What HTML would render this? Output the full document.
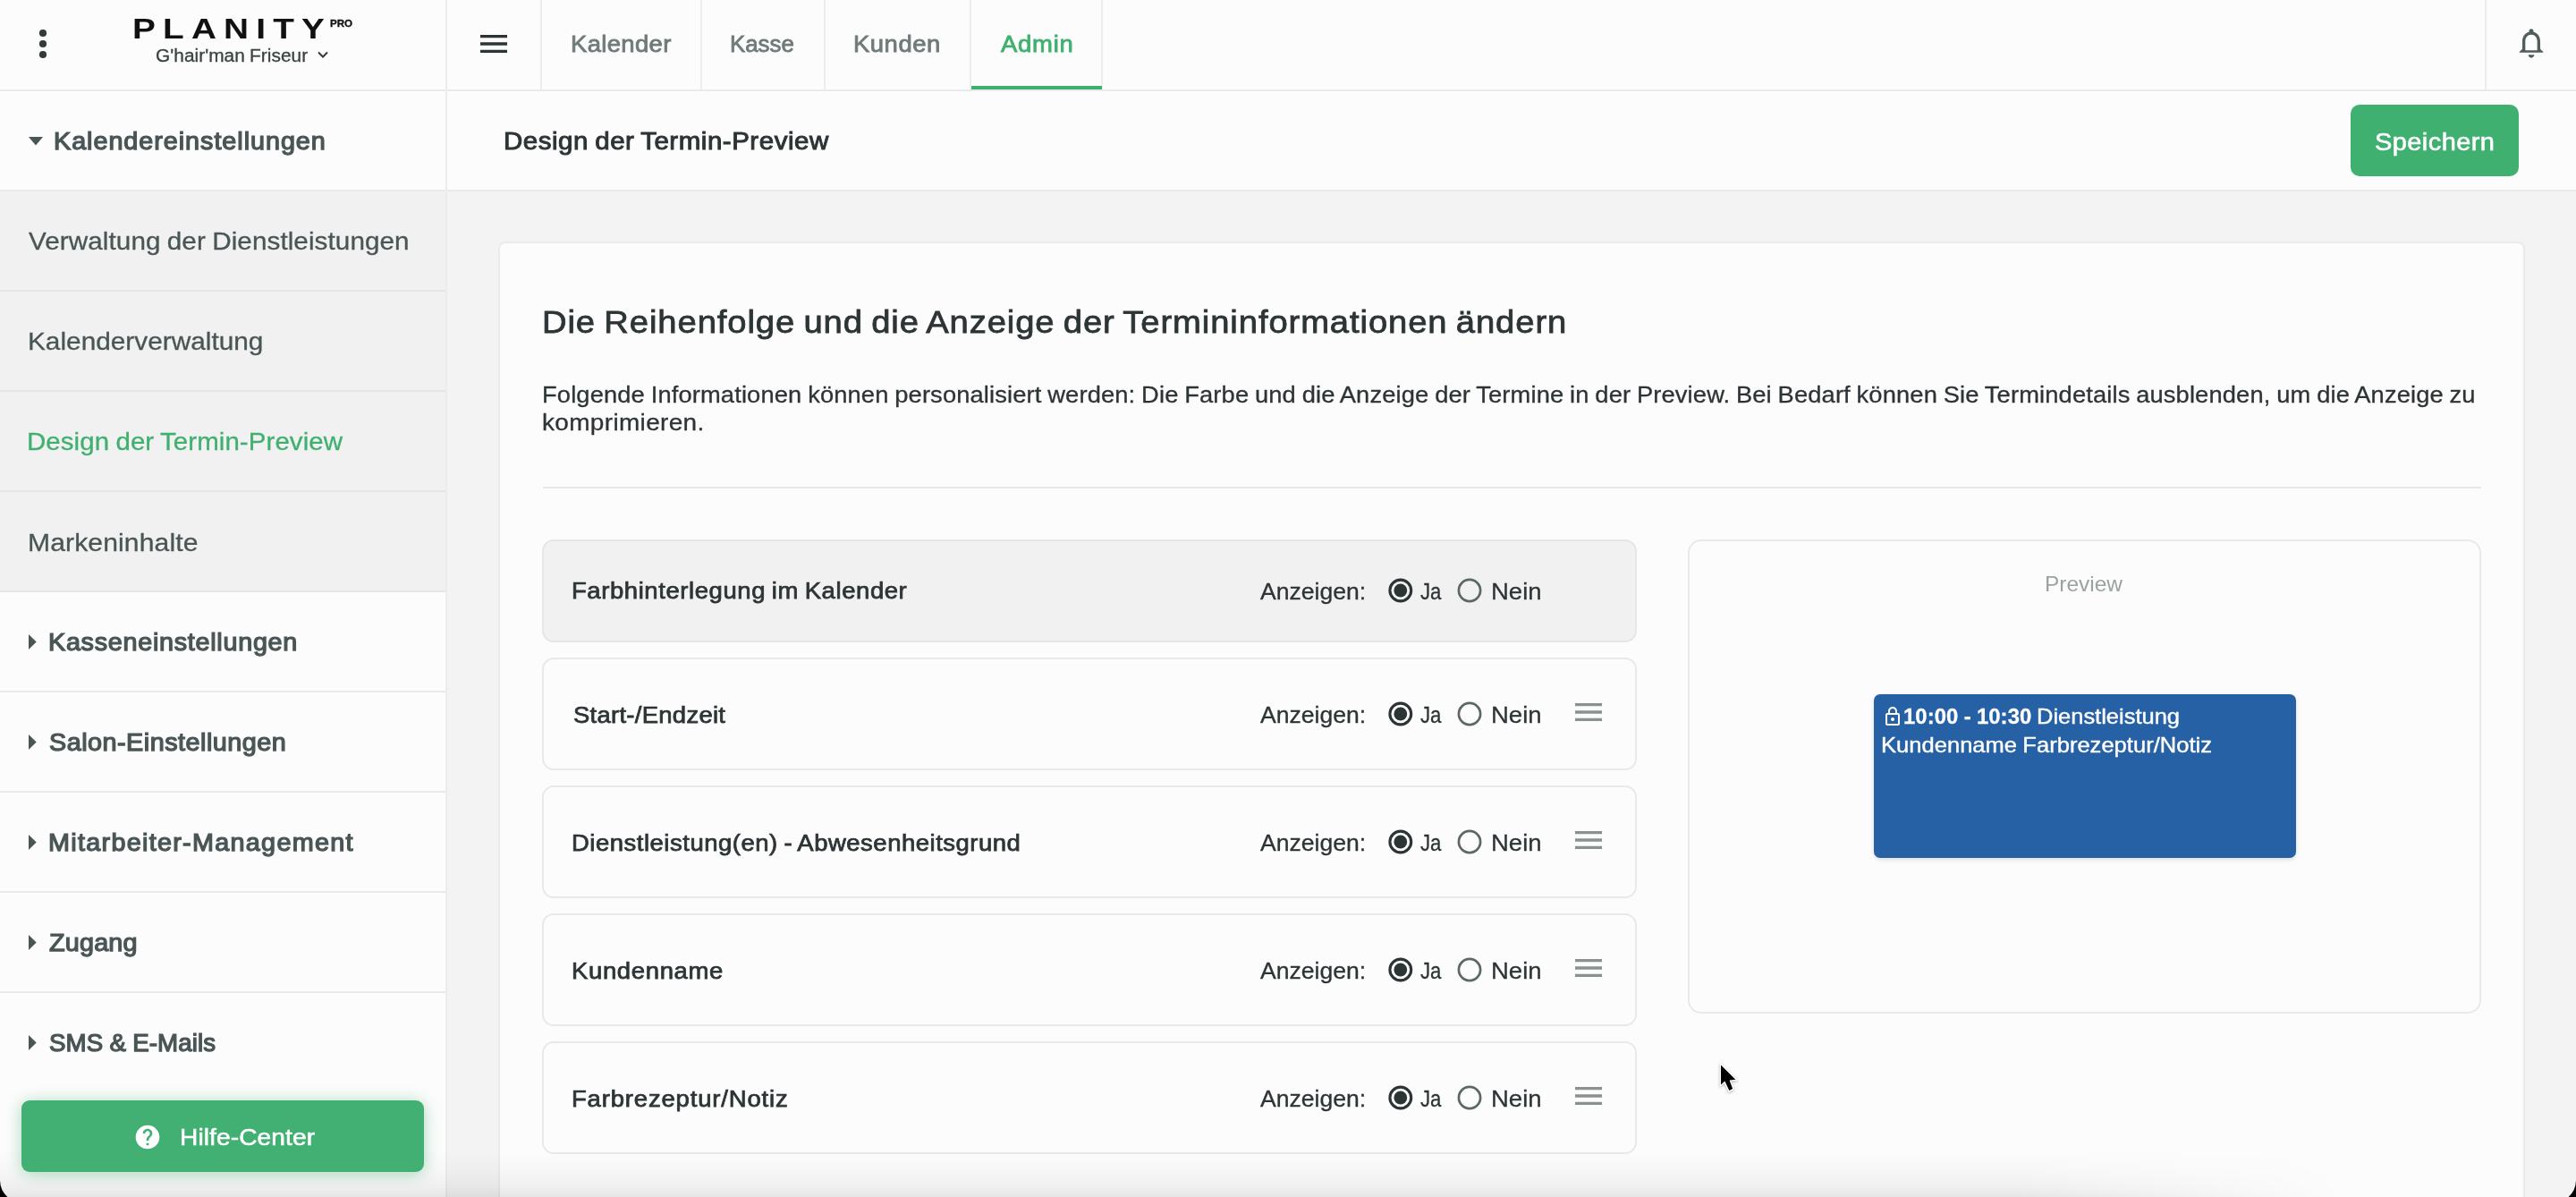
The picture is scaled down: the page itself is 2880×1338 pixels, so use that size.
<!DOCTYPE html>
<html lang="de">
<head>
<meta charset="utf-8">
<title>Planity Pro – Design der Termin-Preview</title>
<style>
*{box-sizing:border-box;margin:0;padding:0}
html,body{width:2880px;height:1338px;overflow:hidden}
body{position:relative;background:#f3f3f3;font-family:"Liberation Sans",sans-serif;}
.a{position:absolute;display:block}
.t{position:absolute;display:block;white-space:nowrap;line-height:1;transform-origin:0 0;}
.w{background:#fcfcfc}
.hl{position:absolute;height:2px;background:#eaeaea}
.vl{position:absolute;width:2px;background:#ececec}
.sub{position:absolute;left:0;width:498px;height:110px;background:#f1f1f1}
.row{position:absolute;left:606px;width:1224px;height:125px;border:2px solid #e9e9e9;border-radius:13px;background:#fcfcfc}
svg{position:absolute;display:block;overflow:visible}
@media (max-width:1600px){html{zoom:.5}}
</style>
</head>
<body>
<!-- white zones -->
<header class="a w" style="left:0;top:0;width:2880px;height:100px"></header>
<div class="a w" style="left:0;top:102px;width:2880px;height:110px"></div>
<aside class="a w" style="left:0;top:214px;width:498px;height:1124px"></aside>
<!-- sidebar sub items -->
<div class="sub" style="top:214px"></div>
<div class="sub" style="top:326px"></div>
<div class="sub" style="top:438px"></div>
<div class="sub" style="top:550px"></div>
<div class="hl" style="left:0;width:498px;top:324px;background:#e5e5e5"></div>
<div class="hl" style="left:0;width:498px;top:436px;background:#e5e5e5"></div>
<div class="hl" style="left:0;width:498px;top:548px;background:#e5e5e5"></div>
<div class="hl" style="left:0;width:498px;top:660px;background:#e5e5e5"></div>
<div class="hl" style="left:0;width:498px;top:772px"></div>
<div class="hl" style="left:0;width:498px;top:884px"></div>
<div class="hl" style="left:0;width:498px;top:996px"></div>
<div class="hl" style="left:0;width:498px;top:1108px"></div>
<!-- main horizontal lines -->
<div class="hl" style="left:0;width:2880px;top:100px"></div>
<div class="hl" style="left:0;width:2880px;top:212px"></div>
<!-- vertical lines -->
<div class="vl" style="left:498px;top:0;height:1338px"></div>
<div class="vl" style="left:604px;top:0;height:100px"></div>
<div class="vl" style="left:783px;top:0;height:100px"></div>
<div class="vl" style="left:921px;top:0;height:100px"></div>
<div class="vl" style="left:1084px;top:0;height:100px"></div>
<div class="vl" style="left:1231px;top:0;height:100px"></div>
<div class="vl" style="left:2778px;top:0;height:100px"></div>
<div class="a" style="left:1086px;top:96px;width:146px;height:4px;background:#40b070"></div>

<!-- header icons -->
<svg style="left:40px;top:29px" width="16" height="40" viewBox="0 0 16 40"><circle cx="8" cy="8" r="4.1" fill="#333a3a"/><circle cx="8" cy="20" r="4.1" fill="#333a3a"/><circle cx="8" cy="32" r="4.1" fill="#333a3a"/></svg>
<svg style="left:355px;top:57px" width="12" height="9" viewBox="0 0 12 9"><path d="M1 1.5 L6 6.5 L11 1.5" fill="none" stroke="#333a3a" stroke-width="2"/></svg>
<svg style="left:532px;top:29px" width="40" height="40" viewBox="0 0 24 24"><path d="M3 18h18v-2H3v2zm0-5h18v-2H3v2zm0-7v2h18V6H3z" fill="#2d3436"/></svg>
<svg style="left:2810px;top:28px" width="40" height="40" viewBox="0 0 24 24"><path d="M12 22c1.1 0 2-.9 2-2h-4c0 1.1.9 2 2 2zm6-6v-5c0-3.07-1.63-5.64-4.5-6.32V4c0-.83-.67-1.5-1.5-1.5s-1.5.67-1.5 1.5v.68C7.64 5.36 6 7.92 6 11v5l-2 2v.45h16v-.45l-2-2zm-2 1H8v-6c0-2.48 1.51-4.5 4-4.5s4 2.02 4 4.5v6z" fill="#515c5c"/></svg>
<!-- logo -->
<span class="t" id="logo" style="left:148.2px;top:17.1px;font-size:31px;font-weight:700;color:#111;letter-spacing:6.55px;transform-origin:0 0;transform:scaleX(1.25)">PLANITY</span>

<!-- sidebar carets -->
<svg style="left:32px;top:152.5px" width="16" height="10" viewBox="0 0 16 10"><path d="M0 0h16L8 9.5z" fill="#4a5555"/></svg>
<svg style="left:32px;top:709px" width="9" height="17" viewBox="0 0 9 17"><path d="M0 0v17L8.7 8.5z" fill="#4a5555"/></svg>
<svg style="left:32px;top:821px" width="9" height="17" viewBox="0 0 9 17"><path d="M0 0v17L8.7 8.5z" fill="#4a5555"/></svg>
<svg style="left:32px;top:933px" width="9" height="17" viewBox="0 0 9 17"><path d="M0 0v17L8.7 8.5z" fill="#4a5555"/></svg>
<svg style="left:32px;top:1045px" width="9" height="17" viewBox="0 0 9 17"><path d="M0 0v17L8.7 8.5z" fill="#4a5555"/></svg>
<svg style="left:32px;top:1157px" width="9" height="17" viewBox="0 0 9 17"><path d="M0 0v17L8.7 8.5z" fill="#4a5555"/></svg>

<!-- buttons -->
<div class="a" style="left:2628px;top:117px;width:188px;height:80px;border-radius:10px;background:#40b071"></div>
<div class="a" style="z-index:2;left:24px;top:1230px;width:450px;height:80px;border-radius:9px;background:#41b072;box-shadow:0 2px 18px rgba(64,176,112,.45)"></div>
<svg style="z-index:2;left:149px;top:1254.5px" width="32" height="32" viewBox="0 0 24 24"><path d="M12 2C6.48 2 2 6.48 2 12s4.48 10 10 10 10-4.48 10-10S17.52 2 12 2zm1 17h-2v-2h2v2zm2.07-7.75l-.9.92C13.45 12.9 13 13.5 13 15h-2v-.5c0-1.1.45-2.1 1.17-2.83l1.24-1.26c.37-.36.59-.86.59-1.41 0-1.1-.9-2-2-2s-2 .9-2 2H8c0-2.21 1.79-4 4-4s4 1.79 4 4c0 .88-.36 1.68-.93 2.25z" fill="#fff"/></svg>

<!-- card -->
<main class="a" style="left:557px;top:270px;width:2266px;height:1200px;border:2px solid #eaeaea;border-radius:8px;background:#fcfcfc"></main>
<div class="hl" style="left:607px;width:2167px;top:544px;background:#e8e8e8"></div>
<div class="row" style="top:602.5px;height:115px;background:#f1f1f1;border-color:#e6e6e6"></div>
<div class="row" style="top:734.5px;height:126px"></div>
<div class="row" style="top:877.5px;height:126px"></div>
<div class="row" style="top:1020.5px;height:126px"></div>
<div class="row" style="top:1163.5px;height:126px"></div>
<svg style="left:1756px;top:776.0px" width="40" height="40" viewBox="0 0 24 24"><path d="M3 18h18v-2H3v2zm0-5h18v-2H3v2zm0-7v2h18V6H3z" fill="#8a9191"/></svg>
<svg style="left:1756px;top:919.0px" width="40" height="40" viewBox="0 0 24 24"><path d="M3 18h18v-2H3v2zm0-5h18v-2H3v2zm0-7v2h18V6H3z" fill="#8a9191"/></svg>
<svg style="left:1756px;top:1062.0px" width="40" height="40" viewBox="0 0 24 24"><path d="M3 18h18v-2H3v2zm0-5h18v-2H3v2zm0-7v2h18V6H3z" fill="#8a9191"/></svg>
<svg style="left:1756px;top:1205.0px" width="40" height="40" viewBox="0 0 24 24"><path d="M3 18h18v-2H3v2zm0-5h18v-2H3v2zm0-7v2h18V6H3z" fill="#8a9191"/></svg>
<svg style="left:1552px;top:646px" width="28" height="28" viewBox="0 0 28 28"><circle cx="13.8" cy="14" r="11.9" fill="none" stroke="#2d3436" stroke-width="3.1"/><circle cx="13.8" cy="14" r="7.4" fill="#2d3436"/></svg><svg style="left:1629px;top:646px" width="28" height="28" viewBox="0 0 28 28"><circle cx="14" cy="14" r="12.1" fill="none" stroke="#5c6767" stroke-width="2.7"/></svg>
<svg style="left:1552px;top:783.5px" width="28" height="28" viewBox="0 0 28 28"><circle cx="13.8" cy="14" r="11.9" fill="none" stroke="#2d3436" stroke-width="3.1"/><circle cx="13.8" cy="14" r="7.4" fill="#2d3436"/></svg><svg style="left:1629px;top:783.5px" width="28" height="28" viewBox="0 0 28 28"><circle cx="14" cy="14" r="12.1" fill="none" stroke="#5c6767" stroke-width="2.7"/></svg>
<svg style="left:1552px;top:926.5px" width="28" height="28" viewBox="0 0 28 28"><circle cx="13.8" cy="14" r="11.9" fill="none" stroke="#2d3436" stroke-width="3.1"/><circle cx="13.8" cy="14" r="7.4" fill="#2d3436"/></svg><svg style="left:1629px;top:926.5px" width="28" height="28" viewBox="0 0 28 28"><circle cx="14" cy="14" r="12.1" fill="none" stroke="#5c6767" stroke-width="2.7"/></svg>
<svg style="left:1552px;top:1069.5px" width="28" height="28" viewBox="0 0 28 28"><circle cx="13.8" cy="14" r="11.9" fill="none" stroke="#2d3436" stroke-width="3.1"/><circle cx="13.8" cy="14" r="7.4" fill="#2d3436"/></svg><svg style="left:1629px;top:1069.5px" width="28" height="28" viewBox="0 0 28 28"><circle cx="14" cy="14" r="12.1" fill="none" stroke="#5c6767" stroke-width="2.7"/></svg>
<svg style="left:1552px;top:1212.5px" width="28" height="28" viewBox="0 0 28 28"><circle cx="13.8" cy="14" r="11.9" fill="none" stroke="#2d3436" stroke-width="3.1"/><circle cx="13.8" cy="14" r="7.4" fill="#2d3436"/></svg><svg style="left:1629px;top:1212.5px" width="28" height="28" viewBox="0 0 28 28"><circle cx="14" cy="14" r="12.1" fill="none" stroke="#5c6767" stroke-width="2.7"/></svg>
<!-- preview -->
<div class="a" style="left:1887px;top:603px;width:887px;height:530px;border:2px solid #e9e9e9;border-radius:15px"></div>
<div class="a" style="left:2095px;top:776px;width:472px;height:183px;border-radius:7px;background:#2660a5;box-shadow:0 2px 5px rgba(0,0,0,.12)"></div>
<svg style="left:2103.6px;top:789.2px" width="24" height="24" viewBox="0 0 24 24"><path d="M12 17c1.1 0 2-.9 2-2s-.9-2-2-2-2 .9-2 2 .9 2 2 2zm6-9h-1V6c0-2.76-2.24-5-5-5S7 3.240 7 6v2H6c-1.1 0-2 .9-2 2v10c0 1.1.9 2 2 2h12c1.1 0 2-.9 2-2V10c0-1.1-.9-2-2-2zM8.900 6c0-1.71 1.39-3.1 3.1-3.1s3.100 1.390 3.100 3.100v2H8.900V6zM18 20H6V10h12v10z" fill="#fff"/></svg>

<span class="t" style="left:173.98px;top:51.67px;font-size:20px;font-weight:400;color:#3a4242;letter-spacing:0.036px;word-spacing:-0.608px;-webkit-text-stroke:0.30px #3a4242;transform:scaleX(1.0425);">G'hair'man Friseur</span>
<span class="t" style="left:368.78px;top:20.83px;font-size:11.3px;font-weight:700;color:#111;letter-spacing:0.000px;-webkit-text-stroke:0.30px #111;transform:scaleX(1.0256);">PRO</span>
<span class="t" style="left:637.59px;top:36.50px;font-size:25.52px;font-weight:400;color:#707a7a;letter-spacing:0.334px;-webkit-text-stroke:0.80px #707a7a;transform:scaleX(1.0750);">Kalender</span>
<span class="t" style="left:816.49px;top:36.50px;font-size:25.52px;font-weight:400;color:#707a7a;letter-spacing:-0.000px;-webkit-text-stroke:0.80px #707a7a;transform:scaleX(1.0132);">Kasse</span>
<span class="t" style="left:954.39px;top:36.50px;font-size:25.52px;font-weight:400;color:#707a7a;letter-spacing:0.491px;-webkit-text-stroke:0.80px #707a7a;transform:scaleX(1.0750);">Kunden</span>
<span class="t" style="left:1118.83px;top:36.50px;font-size:25.52px;font-weight:400;color:#40b070;letter-spacing:0.727px;-webkit-text-stroke:0.80px #40b070;transform:scaleX(1.0750);">Admin</span>
<span class="t" style="left:60.43px;top:144.96px;font-size:26.75px;font-weight:400;color:#4a5555;letter-spacing:0.894px;-webkit-text-stroke:1.25px #4a5555;transform:scaleX(1.0750);">Kalendereinstellungen</span>
<span class="t" style="left:563.41px;top:144.48px;font-size:27.43px;font-weight:400;color:#2d3436;letter-spacing:0.495px;word-spacing:-1.349px;-webkit-text-stroke:0.95px #2d3436;transform:scaleX(1.0750);">Design der Termin-Preview</span>
<span class="t" style="left:2654.99px;top:145.87px;font-size:26.97px;font-weight:400;color:#fff;letter-spacing:0.393px;-webkit-text-stroke:0.55px #fff;transform:scaleX(1.0750);">Speichern</span>
<span class="t" style="left:32.46px;top:256.30px;font-size:28px;font-weight:400;color:#4a5555;letter-spacing:0.065px;word-spacing:-0.981px;-webkit-text-stroke:0.30px #4a5555;transform:scaleX(1.0599);">Verwaltung der Dienstleistungen</span>
<span class="t" style="left:31.13px;top:368.30px;font-size:28px;font-weight:400;color:#4a5555;letter-spacing:-0.000px;-webkit-text-stroke:0.30px #4a5555;transform:scaleX(1.0642);">Kalenderverwaltung</span>
<span class="t" style="left:30.26px;top:480.30px;font-size:28px;font-weight:400;color:#40b070;letter-spacing:0.078px;word-spacing:-0.942px;-webkit-text-stroke:0.30px #40b070;transform:scaleX(1.0519);">Design der Termin-Preview</span>
<span class="t" style="left:31.11px;top:592.80px;font-size:28px;font-weight:400;color:#4a5555;letter-spacing:0.107px;-webkit-text-stroke:0.30px #4a5555;transform:scaleX(1.0750);">Markeninhalte</span>
<span class="t" style="left:54.03px;top:705.36px;font-size:26.75px;font-weight:400;color:#4a5555;letter-spacing:0.667px;-webkit-text-stroke:1.25px #4a5555;transform:scaleX(1.0750);">Kasseneinstellungen</span>
<span class="t" style="left:55.17px;top:817.36px;font-size:26.75px;font-weight:400;color:#4a5555;letter-spacing:0.464px;-webkit-text-stroke:1.25px #4a5555;transform:scaleX(1.0750);">Salon-Einstellungen</span>
<span class="t" style="left:54.03px;top:929.36px;font-size:26.75px;font-weight:400;color:#4a5555;letter-spacing:1.207px;-webkit-text-stroke:1.25px #4a5555;transform:scaleX(1.0750);">Mitarbeiter-Management</span>
<span class="t" style="left:55.17px;top:1041.36px;font-size:26.75px;font-weight:400;color:#4a5555;letter-spacing:0.192px;-webkit-text-stroke:1.25px #4a5555;transform:scaleX(1.0750);">Zugang</span>
<span class="t" style="left:55.18px;top:1153.36px;font-size:26.75px;font-weight:400;color:#4a5555;letter-spacing:0.106px;word-spacing:-0.633px;-webkit-text-stroke:1.25px #4a5555;transform:scaleX(1.0349);">SMS &amp; E-Mails</span>
<span class="t" style="left:201.10px;top:1257.75px;font-size:26.17px;font-weight:400;color:#fff;letter-spacing:0.087px;z-index:2;-webkit-text-stroke:0.55px #fff;transform:scaleX(1.0750);">Hilfe-Center</span>
<span class="t" style="left:605.65px;top:342.63px;font-size:35.52px;font-weight:400;color:#2d3436;letter-spacing:0.843px;word-spacing:-2.011px;-webkit-text-stroke:0.80px #2d3436;transform:scaleX(1.0750);">Die Reihenfolge und die Anzeige der Termininformationen ändern</span>
<span class="t" style="left:605.82px;top:427.99px;font-size:26px;font-weight:400;color:#2d3436;letter-spacing:0.129px;word-spacing:-0.919px;-webkit-text-stroke:0.30px #2d3436;transform:scaleX(1.0500);">Folgende Informationen können personalisiert werden: Die Farbe und die Anzeige der Termine in der Preview. Bei Bedarf können Sie Termindetails ausblenden, um die Anzeige zu</span>
<span class="t" style="left:605.91px;top:459.39px;font-size:26px;font-weight:400;color:#2d3436;letter-spacing:0.324px;-webkit-text-stroke:0.30px #2d3436;transform:scaleX(1.0750);">komprimieren.</span>
<span class="t" style="left:639.46px;top:648.17px;font-size:25.55px;font-weight:400;color:#2d3436;letter-spacing:0.547px;word-spacing:-1.362px;-webkit-text-stroke:0.75px #2d3436;transform:scaleX(1.0750);">Farbhinterlegung im Kalender</span>
<span class="t" style="left:1408.75px;top:647.79px;font-size:26px;font-weight:400;color:#2d3436;letter-spacing:0.000px;-webkit-text-stroke:0.30px #2d3436;transform:scaleX(1.0211);">Anzeigen:</span>
<span class="t" style="left:1587.78px;top:647.79px;font-size:26px;font-weight:400;color:#2d3436;letter-spacing:0.000px;-webkit-text-stroke:0.30px #2d3436;transform:scaleX(0.8537);">Ja</span>
<span class="t" style="left:1667.31px;top:647.79px;font-size:26px;font-weight:400;color:#2d3436;letter-spacing:-0.000px;-webkit-text-stroke:0.30px #2d3436;transform:scaleX(1.0578);">Nein</span>
<span class="t" style="left:640.74px;top:786.67px;font-size:25.55px;font-weight:400;color:#2d3436;letter-spacing:0.255px;-webkit-text-stroke:0.75px #2d3436;transform:scaleX(1.0750);">Start-/Endzeit</span>
<span class="t" style="left:1408.75px;top:786.29px;font-size:26px;font-weight:400;color:#2d3436;letter-spacing:0.000px;-webkit-text-stroke:0.30px #2d3436;transform:scaleX(1.0211);">Anzeigen:</span>
<span class="t" style="left:1587.78px;top:786.29px;font-size:26px;font-weight:400;color:#2d3436;letter-spacing:0.000px;-webkit-text-stroke:0.30px #2d3436;transform:scaleX(0.8537);">Ja</span>
<span class="t" style="left:1667.31px;top:786.29px;font-size:26px;font-weight:400;color:#2d3436;letter-spacing:-0.000px;-webkit-text-stroke:0.30px #2d3436;transform:scaleX(1.0578);">Nein</span>
<span class="t" style="left:639.46px;top:929.67px;font-size:25.55px;font-weight:400;color:#2d3436;letter-spacing:0.483px;word-spacing:-1.297px;-webkit-text-stroke:0.75px #2d3436;transform:scaleX(1.0750);">Dienstleistung(en) - Abwesenheitsgrund</span>
<span class="t" style="left:1408.75px;top:929.29px;font-size:26px;font-weight:400;color:#2d3436;letter-spacing:0.000px;-webkit-text-stroke:0.30px #2d3436;transform:scaleX(1.0211);">Anzeigen:</span>
<span class="t" style="left:1587.78px;top:929.29px;font-size:26px;font-weight:400;color:#2d3436;letter-spacing:0.000px;-webkit-text-stroke:0.30px #2d3436;transform:scaleX(0.8537);">Ja</span>
<span class="t" style="left:1667.31px;top:929.29px;font-size:26px;font-weight:400;color:#2d3436;letter-spacing:-0.000px;-webkit-text-stroke:0.30px #2d3436;transform:scaleX(1.0578);">Nein</span>
<span class="t" style="left:639.46px;top:1072.67px;font-size:25.55px;font-weight:400;color:#2d3436;letter-spacing:0.617px;-webkit-text-stroke:0.75px #2d3436;transform:scaleX(1.0750);">Kundenname</span>
<span class="t" style="left:1408.75px;top:1072.29px;font-size:26px;font-weight:400;color:#2d3436;letter-spacing:0.000px;-webkit-text-stroke:0.30px #2d3436;transform:scaleX(1.0211);">Anzeigen:</span>
<span class="t" style="left:1587.78px;top:1072.29px;font-size:26px;font-weight:400;color:#2d3436;letter-spacing:0.000px;-webkit-text-stroke:0.30px #2d3436;transform:scaleX(0.8537);">Ja</span>
<span class="t" style="left:1667.31px;top:1072.29px;font-size:26px;font-weight:400;color:#2d3436;letter-spacing:-0.000px;-webkit-text-stroke:0.30px #2d3436;transform:scaleX(1.0578);">Nein</span>
<span class="t" style="left:639.46px;top:1215.67px;font-size:25.55px;font-weight:400;color:#2d3436;letter-spacing:0.782px;-webkit-text-stroke:0.75px #2d3436;transform:scaleX(1.0750);">Farbrezeptur/Notiz</span>
<span class="t" style="left:1408.75px;top:1215.29px;font-size:26px;font-weight:400;color:#2d3436;letter-spacing:0.000px;-webkit-text-stroke:0.30px #2d3436;transform:scaleX(1.0211);">Anzeigen:</span>
<span class="t" style="left:1587.78px;top:1215.29px;font-size:26px;font-weight:400;color:#2d3436;letter-spacing:0.000px;-webkit-text-stroke:0.30px #2d3436;transform:scaleX(0.8537);">Ja</span>
<span class="t" style="left:1667.31px;top:1215.29px;font-size:26px;font-weight:400;color:#2d3436;letter-spacing:-0.000px;-webkit-text-stroke:0.30px #2d3436;transform:scaleX(1.0578);">Nein</span>
<span class="t" style="left:2286.09px;top:640.58px;font-size:24px;font-weight:400;color:#9aa2a2;letter-spacing:0.000px;transform:scaleX(1.0194);">Preview</span>
<span class="t" style="left:2127.96px;top:788.88px;font-size:24px;font-weight:700;color:#fff;letter-spacing:0.079px;word-spacing:-0.475px;-webkit-text-stroke:0.30px #fff;transform:scaleX(0.9942);">10:00 - 10:30</span>
<span class="t" style="left:2276.72px;top:788.88px;font-size:24px;font-weight:400;color:#fff;letter-spacing:0.000px;-webkit-text-stroke:0.40px #fff;transform:scaleX(1.0613);">Dienstleistung</span>
<span class="t" style="left:2103.22px;top:821.38px;font-size:24px;font-weight:400;color:#fff;letter-spacing:0.030px;word-spacing:-0.831px;-webkit-text-stroke:0.40px #fff;transform:scaleX(1.0628);">Kundenname Farbrezeptur/Notiz</span>

<!-- cursor -->
<svg style="z-index:4;left:1922px;top:1188px;filter:drop-shadow(0 1.5px 1.5px rgba(0,0,0,.3))" width="24" height="36" viewBox="0 0 24 36"><path d="M2 2.500V24.400L6.400 20.600L11.300 31.100L15.100 29.100L11.600 19.400L18.400 18.700z" fill="#000" stroke="#fff" stroke-width="2.600" stroke-linejoin="miter" paint-order="stroke"/></svg>
<!-- bottom shadow + window corners -->
<div class="a" style="z-index:1;left:0;top:1286px;width:2880px;height:52px;background:linear-gradient(to bottom,rgba(0,0,0,0) 0%,rgba(0,0,0,.018) 45%,rgba(0,0,0,.05) 80%,rgba(0,0,0,.085) 100%);-webkit-mask-image:linear-gradient(to right,#000 0,#000 2250px,transparent 2620px);mask-image:linear-gradient(to right,#000 0,#000 2250px,transparent 2620px)"></div>
<svg style="z-index:3;left:0;top:1318px" width="10" height="20" viewBox="0 0 10 20"><path d="M0 0A26.6 26.6 0 0 0 8.4 20H0z" fill="#000"/></svg>
<svg style="z-index:3;left:2870px;top:1318px" width="10" height="20" viewBox="0 0 10 20"><path d="M10 0A26.6 26.6 0 0 1 1.600 20H10z" fill="#000"/></svg>
</body>
</html>
